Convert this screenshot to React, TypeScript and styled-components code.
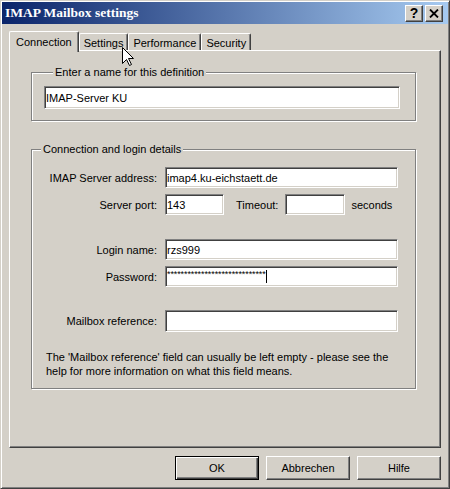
import React from "react";
import styled, { createGlobalStyle, css } from "styled-components";

const GlobalStyle = createGlobalStyle`
  html, body {
    margin: 0;
    padding: 0;
    background: #d4d0c8;
  }
  body {
    font-family: "Liberation Sans", Arial, sans-serif;
    font-size: 11px;
    color: #000;
  }
`;

const Window = styled.div`
  position: relative;
  box-sizing: border-box;
  width: 450px;
  height: 489px;
  padding: 1px;
  background: #d4d0c8;
  border: 1px solid;
  border-color: #d4d0c8 #404040 #404040 #d4d0c8;
  box-shadow: inset 1px 1px 0 #fff, inset -1px -1px 0 #808080;
  display: flex;
  flex-direction: column;
`;

const TitleBar = styled.div`
  height: 22px;
  display: flex;
  align-items: center;
  padding: 0 5px 0 3px;
  background: linear-gradient(to right, #0a246a, #a6caf0);
`;

const Title = styled.span`
  flex: 1;
  font-family: "Liberation Serif", "Times New Roman", serif;
  font-weight: bold;
  font-size: 13.5px;
  color: #fff;
`;

const CaptionButtons = styled.div`
  display: flex;
  gap: 2px;
`;

const CaptionButton = styled.div`
  box-sizing: border-box;
  width: 18px;
  height: 17px;
  background: #d4d0c8;
  border: 1px solid;
  border-color: #fff #404040 #404040 #fff;
  box-shadow: inset -1px -1px 0 #808080;
  display: flex;
  align-items: center;
  justify-content: center;
  font: bold 14px "Liberation Sans", Arial, sans-serif;
  color: #000;
`;

const Body = styled.div`
  flex: 1;
  display: flex;
  flex-direction: column;
  padding: 7px;
`;

const TabStrip = styled.div`
  display: flex;
  align-items: flex-end;
  height: 19px;
  padding-left: 2px;
`;

const Tab = styled.div<{ $active?: boolean }>`
  position: relative;
  box-sizing: border-box;
  height: 17px;
  padding: 3px 4px 0;
  line-height: 13px;
  background: #d4d0c8;
  border-top: 1px solid #fff;
  border-left: 1px solid #fff;
  border-right: 1px solid #404040;
  border-radius: 2px 2px 0 0;
  box-shadow: inset -1px 0 0 #808080;
  white-space: nowrap;

  ${(p) =>
    p.$active &&
    css`
      z-index: 1;
      height: 21px;
      padding: 4px 6px 0;
      margin: 0 0 -2px -2px;
    `}
`;

const Panel = styled.div`
  box-sizing: border-box;
  height: 398px;
  padding: 15px 0 0 21px;
  border: 1px solid;
  border-color: #fff #404040 #404040 #fff;
  box-shadow: inset -1px -1px 0 #808080;
`;

const Group = styled.fieldset<{ $top?: number }>`
  box-sizing: border-box;
  width: 385px;
  min-inline-size: 0;
  margin: ${(p) => p.$top ?? 0}px 0 0 0;
  padding: 7px 15px 11px 12px;
  border: 1px solid #808080;
  box-shadow: inset 1px 1px 0 #fff, 1px 1px 0 #fff;
`;

const DetailsGroup = styled(Group)`
  padding: 11px 0 10px 0;
`;

const Legend = styled.legend`
  margin-left: 9px;
  padding: 0 2px;
  line-height: 13px;
  background: #d4d0c8;
`;

const Row = styled.div<{ $top?: number }>`
  display: grid;
  grid-template-columns: 125px 233px;
  column-gap: 8px;
  align-items: center;
  margin-top: ${(p) => p.$top ?? 0}px;
`;

const Label = styled.span`
  text-align: right;
  white-space: nowrap;
`;

const TextBox = styled.div<{ $w?: number; $h?: number }>`
  box-sizing: border-box;
  width: ${(p) => (p.$w ? `${p.$w}px` : "100%")};
  height: ${(p) => p.$h ?? 21}px;
  padding: 0 1px;
  background: #fff;
  border: 1px solid;
  border-color: #808080 #fff #fff #808080;
  box-shadow: inset 1px 1px 0 #404040, inset -1px -1px 0 #d4d0c8;
  display: flex;
  align-items: center;
  white-space: nowrap;
  overflow: hidden;
`;

const Inline = styled.div`
  display: flex;
  align-items: center;
`;

const InlineLabel = styled.span<{ $left: number }>`
  margin-left: ${(p) => p.$left}px;
  white-space: nowrap;
`;

const Masked = styled.span`
  font-size: 9px;
  align-self: flex-start;
  margin-top: 2px;
  letter-spacing: -0.1px;
`;

const Caret = styled.span`
  display: inline-block;
  width: 1px;
  height: 13px;
  background: #000;
`;

const Note = styled.p`
  width: 354px;
  margin: 18px 0 0 14px;
  line-height: 14px;
`;

const ButtonRow = styled.div`
  display: flex;
  justify-content: flex-end;
  gap: 7px;
  margin-top: 8px;
`;

const Button = styled.button<{ $default?: boolean }>`
  box-sizing: border-box;
  width: 84px;
  height: 24px;
  padding: 0;
  font: 11px "Liberation Sans", Arial, sans-serif;
  color: #000;
  background: #d4d0c8;
  border: 1px solid;
  border-color: #fff #404040 #404040 #fff;
  box-shadow: inset -1px -1px 0 #808080;

  ${(p) =>
    p.$default &&
    css`
      border: 1px solid #000;
      box-shadow: inset 1px 1px 0 #fff, inset -1px -1px 0 #404040,
        inset -2px -2px 0 #808080;
    `}
`;

const Pointer = styled.svg`
  position: absolute;
  left: 121px;
  top: 46px;
  z-index: 5;
`;

function CloseGlyph() {
  return (
    <svg width="10" height="9" viewBox="0 0 10 9">
      <path d="M1 0.5 L9 8.5 M9 0.5 L1 8.5" stroke="#000" strokeWidth="1.8" />
    </svg>
  );
}

export default function App() {
  return (
    <>
      <GlobalStyle />
      <Window>
        <TitleBar>
          <Title>IMAP Mailbox settings</Title>
          <CaptionButtons>
            <CaptionButton>?</CaptionButton>
            <CaptionButton>
              <CloseGlyph />
            </CaptionButton>
          </CaptionButtons>
        </TitleBar>

        <Body>
          <TabStrip>
            <Tab $active>Connection</Tab>
            <Tab>Settings</Tab>
            <Tab>Performance</Tab>
            <Tab>Security</Tab>
          </TabStrip>

          <Panel>
            <Group>
              <Legend>Enter a name for this definition</Legend>
              <TextBox $w={356} $h={23}>IMAP-Server KU</TextBox>
            </Group>

            <DetailsGroup $top={22}>
              <Legend>Connection and login details</Legend>

              <Row>
                <Label>IMAP Server address:</Label>
                <TextBox>imap4.ku-eichstaett.de</TextBox>
              </Row>

              <Row $top={6}>
                <Label>Server port:</Label>
                <Inline>
                  <TextBox $w={59}>143</TextBox>
                  <InlineLabel $left={12}>Timeout:</InlineLabel>
                  <InlineLabel $left={7}>
                    <TextBox $w={60} />
                  </InlineLabel>
                  <InlineLabel $left={6}>seconds</InlineLabel>
                </Inline>
              </Row>

              <Row $top={24}>
                <Label>Login name:</Label>
                <TextBox>rzs999</TextBox>
              </Row>

              <Row $top={6}>
                <Label>Password:</Label>
                <TextBox>
                  <Masked>{"*".repeat(29)}</Masked>
                  <Caret />
                </TextBox>
              </Row>

              <Row $top={23}>
                <Label>Mailbox reference:</Label>
                <TextBox $h={22} />
              </Row>

              <Note>
                The 'Mailbox reference' field can usually be left empty - please
                see the help for more information on what this field means.
              </Note>
            </DetailsGroup>
          </Panel>

          <ButtonRow>
            <Button $default>OK</Button>
            <Button>Abbrechen</Button>
            <Button>Hilfe</Button>
          </ButtonRow>
        </Body>

        <Pointer width="12" height="19" viewBox="0 0 12 19">
          <path
            d="M0.5 0.5 L0.5 16.5 L4.5 12.5 L7.5 18.5 L9.5 17.5 L6.5 11.5 L11.5 11.5 Z"
            fill="#fff"
            stroke="#000"
            strokeWidth="1"
          />
        </Pointer>
      </Window>
    </>
  );
}
